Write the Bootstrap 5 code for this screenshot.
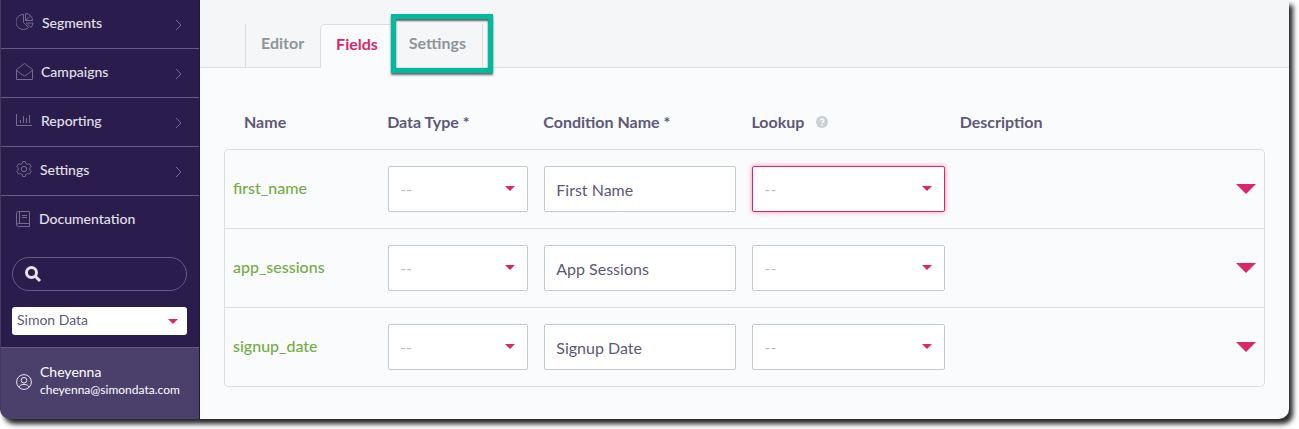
<!DOCTYPE html>
<html lang="en">
<head>
<meta charset="utf-8">
<meta name="viewport" content="width=device-width, initial-scale=1">
<title>Fields</title>
<link href="https://cdn.jsdelivr.net/npm/bootstrap@5.3.0/dist/css/bootstrap.min.css" rel="stylesheet">
<style>
  :root { --ink: #5e5878; --pink: #dc266b; --line: #dcdfe2; --night: #2a1d4e; }
  body { font-family: Lato, sans-serif; font-size: 16px; color: var(--ink); background: #fff; padding: 0 10px 10px 0; }
  .app-frame { min-height: calc(100vh - 10px); background: #fafbfd; border-radius: 0 0 10px 10px; box-shadow: 4px 5px 5px rgba(0,0,0,.85); }
  /* Sidebar */
  .side { width: 200px; background: var(--night); border-left: 1px solid #46395f; border-right: 1px solid #23173f; border-bottom-left-radius: 10px; overflow: hidden; }
  .side-link { height: 49px; padding: 0 17px 4px 15px; color: #e3e1e8; font-size: 14px; font-weight: 500; text-decoration: none; border-bottom: 1px solid #665b82; }
  .side-link.plain { border-bottom: 0; }
  .side-link:hover { color: #fff; }
  .side svg { fill: none; stroke: #756b8f; flex: none; }
  .side .chev { margin-top: 5px; }
  .side-pad { padding: 0 12px 0 11px; }
  .search-box svg { left: 12px; top: 8px; stroke: #e6e4ea; stroke-width: 3; }
  .search-box input { height: 34px; background: transparent; border: 1px solid #665b82; border-radius: 17px; padding-left: 36px; color: #fff; }
  .caret-select { appearance: none; background: #fff url("data:image/svg+xml,%3Csvg xmlns='http://www.w3.org/2000/svg' width='10' height='5'%3E%3Cpath d='M0 0h10L5 5z' fill='%23dc266b'/%3E%3C/svg%3E") no-repeat right 12px top 19px; }
  .account { height: 28px; border: 0; border-radius: 3px; color: var(--ink); font-size: 14px; padding: 0 24px 4px 5px; background-position: right 9px top 12px; }
  .user-box { background: #4b406c; border-top: 1px solid #665b82; margin-top: 12px; padding: 14px 8px 12px 15px; color: #fff; font-size: 14px; line-height: 20px; }
  .user-box svg { stroke: #e6e4ea; margin-top: 12px; }
  .user-box .mail { font-size: 12px; line-height: 16px; }
  /* Tabs */
  .top-bar { background: #f5f6f8; border-bottom: 1px solid var(--line); padding: 24px 24px 0 45px; }
  .top-bar .nav-tabs { border: 0; }
  .top-bar .nav-link { height: 43px; padding: 0 16px 4px; margin: 0; border: 0; border-radius: 0; color: #8e9499; font-weight: 700; line-height: 38px; }
  .top-bar .first { border-left: 1px solid var(--line); padding-left: 15px; }
  .top-bar .last { border-right: 1px solid var(--line); }
  .top-bar .nav-link.active { height: 44px; margin-bottom: -1px; padding: 0 15px 4px; color: var(--pink); background: #fafbfd; border: 1px solid var(--line); border-width: 1px 0 0 1px; border-radius: 5px 0 0 0; line-height: 38px; }
  .spotlight { position: absolute; inset: -10px -10px -6px -2px; border: 5px solid #00baa0; box-shadow: 0 2px 2px rgba(0,0,0,.6), inset 0 2px 2px rgba(0,0,0,.6); pointer-events: none; }
  /* Field table */
  .field-area { padding: 36px 24px 32px; }
  .field-table { width: 100%; table-layout: fixed; border-collapse: separate; border-spacing: 0; }
  .field-table th, .field-table td { padding: 16px 8px; vertical-align: middle; }
  .field-table thead th { height: 45px; padding: 0 7px 10px; font-weight: 700; white-space: nowrap; }
  .field-table thead th:first-child { padding-left: 20px; }
  .field-table tbody th, .field-table tbody td { border-top: 1px solid var(--line); }
  .field-table tbody th { border-left: 1px solid var(--line); color: #74ad43; font-weight: 500; padding-bottom: 19px; }
  .field-table tbody td:last-child { border-right: 1px solid var(--line); }
  .field-table tbody tr:last-child > * { border-bottom: 1px solid var(--line); }
  .field-table tbody tr:first-child th { border-top-left-radius: 5px; }
  .field-table tbody tr:first-child td:last-child { border-top-right-radius: 5px; }
  .field-table tbody tr:last-child th { border-bottom-left-radius: 5px; }
  .field-table tbody tr:last-child td:last-child { border-bottom-right-radius: 5px; }
  .field-input { display: block; width: 100%; height: 46px; border: 1px solid #c3cacf; border-radius: 2px; padding: 0 11px; background-color: #fff; color: var(--ink); }
  select.field-input { color: #b7bfc4; }
  .field-input.picked { border-color: var(--pink); box-shadow: 0 0 5px rgba(220,38,107,.5); }
  .col-name, .col-type { width: 15%; }
  .col-cond, .col-look { width: 20%; }
  .col-more { width: 5%; }
  .more-btn { border: 0; padding: 0; background: none; display: block; margin-left: auto; line-height: 0; }
</style>
</head>
<body>
<div class="app-frame d-flex">
  <aside class="side d-flex flex-column flex-shrink-0">
    <nav class="d-flex flex-column">
      <a href="#" class="side-link d-flex align-items-center"><svg width="18" height="18" viewBox="0 0 18 18"><path d="M7.500 1.500A7.500 7.500 0 1 0 12.500 14.500L7.500 9.500zM9.500.500v7h7A7 7 0 0 0 9.500.500zM10.500 10h6.500a7 7 0 0 1-2 4.500z"/><path d="M9.500 7.500l5-4.500"/></svg><span class="ms-2 flex-grow-1">Segments</span><svg class="chev" width="7" height="12"><path d="M1 1l5 5-5 5"/></svg></a>
      <a href="#" class="side-link d-flex align-items-center"><svg width="17" height="17"><path d="M.500 6.500L8.500.500l8 6v10H.500zM.500 7l4 3.500L8.500 13l4-2.500 4-3.500"/></svg><span class="ms-2 flex-grow-1">Campaigns</span><svg class="chev" width="7" height="12"><path d="M1 1l5 5-5 5"/></svg></a>
      <a href="#" class="side-link d-flex align-items-center"><svg width="17" height="14"><path d="M.500 1v11.500H16M4.500 10V7M7.500 10V3M10.500 10V5M13.500 10V2"/></svg><span class="ms-2 flex-grow-1">Reporting</span><svg class="chev" width="7" height="12"><path d="M1 1l5 5-5 5"/></svg></a>
      <a href="#" class="side-link d-flex align-items-center"><svg width="16" height="16" viewBox="0 0 16 16"><circle cx="8" cy="8" r="2.700"/><path d="M6.700.500h2.600l.5 2 1.600.9 2-.6 1.800 2.700L13.800 7v2l1.400 1.500-1.800 2.700-2-.6-1.600.9-.5 2H6.700l-.5-2-1.600-.9-2 .6L.800 10.500 2.200 9V7L.800 5.500l1.800-2.700 2 .6 1.600-.9z" stroke-linejoin="round"/></svg><span class="ms-2 flex-grow-1">Settings</span><svg class="chev" width="7" height="12"><path d="M1 1l5 5-5 5"/></svg></a>
      <a href="#" class="side-link plain d-flex align-items-center"><svg width="15" height="16"><path d="M2.500.500h11v15h-11a2 2 0 0 1-2-2v-11a2 2 0 0 1 2-2zM3.500.500v12M.500 14a2 2 0 0 1 2-1.500h11M6 4.500h5M6 6.500h5"/></svg><span class="ms-2 flex-grow-1">Documentation</span></a>
    </nav>
    <div class="side-pad d-grid gap-3 mt-2 pt-1">
      <div class="search-box position-relative d-flex">
        <svg class="position-absolute" width="18" height="18"><circle cx="7.500" cy="7.500" r="5"/><path d="M11 11l5 5"/></svg>
        <input type="search" class="w-100" aria-label="Search">
      </div>
      <select class="account caret-select w-100" aria-label="Account"><option>Simon Data</option></select>
    </div>
    <div class="user-box flex-grow-1 d-flex align-items-start">
      <svg width="16" height="16" viewBox="0 0 16 16"><circle cx="8" cy="8" r="7.400"/><circle cx="8" cy="6.300" r="2.800"/><path d="M3 13.300c.5-2 2-2.800 5-2.800s4.500.8 5 2.800"/></svg>
      <div class="ms-2"><div>Cheyenna</div><div class="mail">cheyenna@simondata.com</div></div>
    </div>
  </aside>
  <main class="flex-grow-1">
    <header class="top-bar">
      <ul class="nav nav-tabs">
        <li class="nav-item"><a href="#" class="nav-link first">Editor</a></li>
        <li class="nav-item"><a href="#" class="nav-link active" aria-current="page">Fields</a></li>
        <li class="nav-item position-relative"><a href="#" class="nav-link last">Settings</a><span class="spotlight"></span></li>
      </ul>
    </header>
    <section class="field-area">
      <table class="field-table">
        <colgroup><col class="col-name"><col class="col-type"><col class="col-cond"><col class="col-look"><col><col class="col-more"></colgroup>
        <thead>
          <tr><th scope="col">Name</th><th scope="col">Data Type *</th><th scope="col">Condition Name *</th>
          <th scope="col"><span class="d-flex align-items-center">Lookup<svg class="ms-2 ps-1" width="16" height="12" viewBox="0 0 12 12"><circle cx="6" cy="6" r="6" fill="#c9ced2"/><path d="M4.300 4.600c0-2.200 3.500-2 3.500 0C7.800 5.900 6.100 5.800 6.100 7.300M6.100 8.200v1.500" fill="none" stroke="#fff" stroke-width="1.500"/></svg></span></th>
          <th scope="col">Description</th><td></td></tr>
        </thead>
        <tbody>
          <tr><th scope="row">first_name</th>
            <td><select class="field-input caret-select" aria-label="Data type of first_name"><option>--</option></select></td>
            <td><input class="field-input" type="text" value="First Name" aria-label="Condition name of first_name"></td>
            <td><select class="field-input caret-select picked" aria-label="Lookup of first_name"><option>--</option></select></td>
            <td></td><td><button type="button" class="more-btn" aria-label="Expand first_name"><svg width="20" height="10"><path d="M0 0h20L10 10z" fill="#dc266b"/></svg></button></td></tr>
          <tr><th scope="row">app_sessions</th>
            <td><select class="field-input caret-select" aria-label="Data type of app_sessions"><option>--</option></select></td>
            <td><input class="field-input" type="text" value="App Sessions" aria-label="Condition name of app_sessions"></td>
            <td><select class="field-input caret-select" aria-label="Lookup of app_sessions"><option>--</option></select></td>
            <td></td><td><button type="button" class="more-btn" aria-label="Expand app_sessions"><svg width="20" height="10"><path d="M0 0h20L10 10z" fill="#dc266b"/></svg></button></td></tr>
          <tr><th scope="row">signup_date</th>
            <td><select class="field-input caret-select" aria-label="Data type of signup_date"><option>--</option></select></td>
            <td><input class="field-input" type="text" value="Signup Date" aria-label="Condition name of signup_date"></td>
            <td><select class="field-input caret-select" aria-label="Lookup of signup_date"><option>--</option></select></td>
            <td></td><td><button type="button" class="more-btn" aria-label="Expand signup_date"><svg width="20" height="10"><path d="M0 0h20L10 10z" fill="#dc266b"/></svg></button></td></tr>
        </tbody>
      </table>
    </section>
  </main>
</div>
<script src="https://cdn.jsdelivr.net/npm/bootstrap@5.3.0/dist/js/bootstrap.bundle.min.js"></script>
</body>
</html>
